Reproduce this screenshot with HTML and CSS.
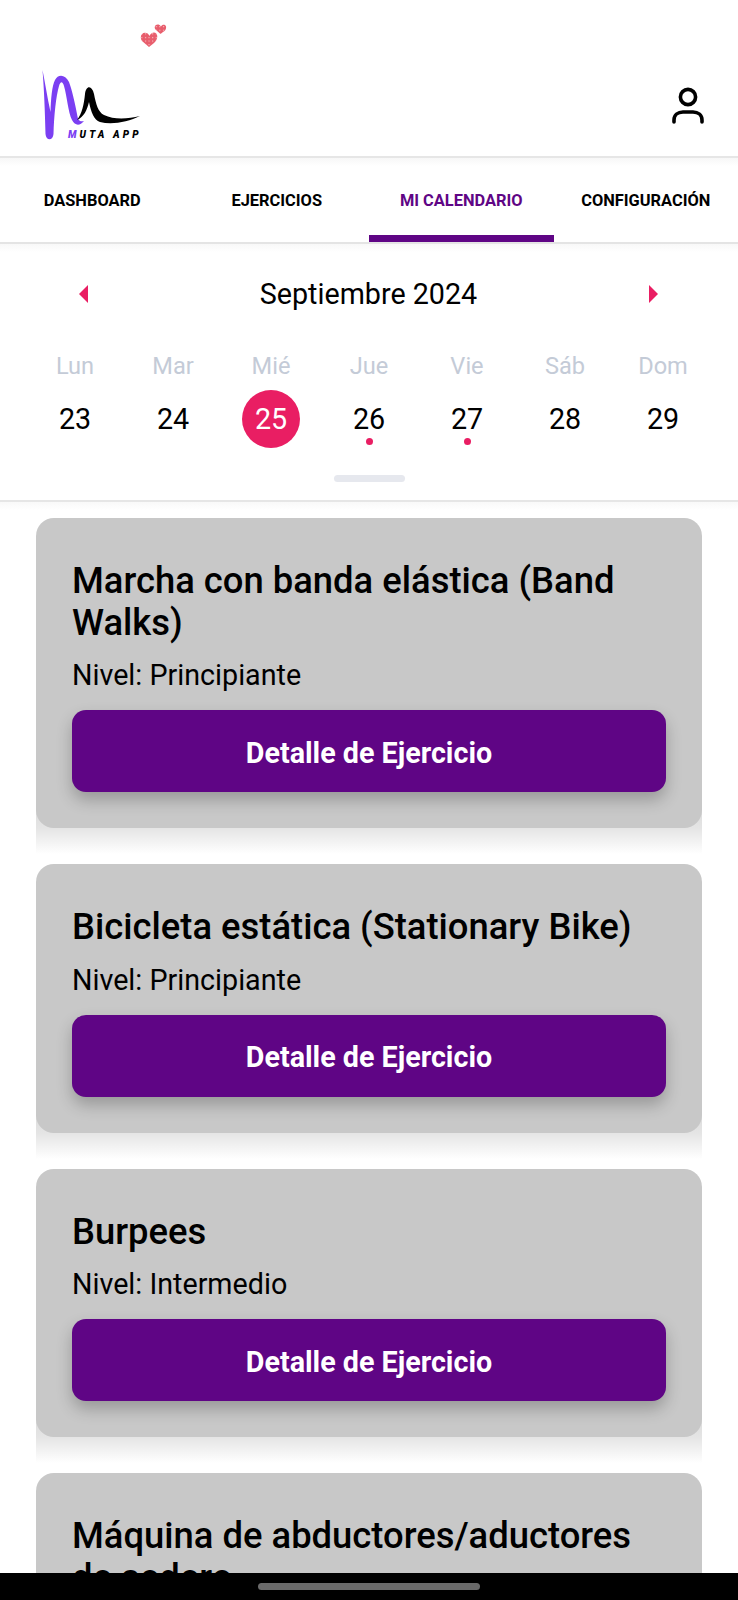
FILE: index.html
```html
<!DOCTYPE html>
<html lang="es">
  <head>
    <meta charset="UTF-8" />
    <meta name="viewport" content="width=device-width, initial-scale=1.0" />
    <title>Muta App - Mi Calendario</title>
    <link rel="stylesheet" href="styles.css">
  </head>
  <body>
  <div class="screen">
    <header class="top-bar">
      <svg class="logo" width="140" height="130" viewBox="30 15 140 130">
        <defs>
          <pattern id="heartDots" width="3.6" height="3.6" patternUnits="userSpaceOnUse">
            <circle cx="1.5" cy="1.5" r="0.6" fill="#fbd3d6" />
          </pattern>
        </defs>
        <g class="hearts">
          <path d="M149 47 L142 41 C139 37 142 32 146 33 C148 33 149 35 149.5 36 C151 32 156 31 157 35 C158 38 156 41 154 43 Z" fill="#e85d6c" />
          <path d="M149 47 L142 41 C139 37 142 32 146 33 C148 33 149 35 149.5 36 C151 32 156 31 157 35 C158 38 156 41 154 43 Z" fill="url(#heartDots)" />
          <path d="M160.5 34 L155.5 29.5 C153.5 27 155.5 24 158.5 24.5 C160 25 160.5 26 161 26.5 C162 24 165.5 24 166 26.5 C166.5 29 165 31 163 32 Z" fill="#e85d6c" />
          <path d="M160.5 34 L155.5 29.5 C153.5 27 155.5 24 158.5 24.5 C160 25 160.5 26 161 26.5 C162 24 165.5 24 166 26.5 C166.5 29 165 31 163 32 Z" fill="url(#heartDots)" />
        </g>
        <path d="M42.5 70 C44 88 45 112 45.5 134 C46 141 53 141 53.5 134 C54 116 56 96 59 86 C60.5 81 62.5 81 64 86 C67 96 68 112 72 120 C75 126 80 126 84 121 C79 122 78 120 77 114 C75 103 72 90 69 82 C65 74 58 74 55 80 C52 86 51 98 50.5 112 C47 96 45 82 42.5 70 Z" fill="#7b3ff2" />
        <path d="M77 120 C82 114 84 104 85 94 C86 85 92 85 94 94 C96 104 98 112 104 115 C114 120 128 119 140 116 C128 122 112 125 100 122 C94 120 91 112 89 102 C87 110 84 117 77 120 Z" fill="#000" />
        <text class="logo-text" x="68" y="138"><tspan fill="#7b3ff2">M</tspan>UTA APP</text>
      </svg>
      <svg class="user-icon" width="40" height="44" viewBox="0 0 40 44" fill="none" stroke="#000" stroke-width="3.6" stroke-linecap="round">
        <circle cx="20" cy="13" r="7.6" />
        <path d="M6 38 V36 C6 31 10 28 15 28 H25 C30 28 34 31 34 36 V38" />
      </svg>
    </header>

    <nav class="tabs">
      <a class="tab">DASHBOARD</a>
      <a class="tab">EJERCICIOS</a>
      <a class="tab active">MI CALENDARIO</a>
      <a class="tab">CONFIGURACIÓN</a>
    </nav>

    <section class="calendar">
      <div class="month-row">
        <span class="arrow arrow-left"></span>
        <span class="month-name">Septiembre 2024</span>
        <span class="arrow arrow-right"></span>
      </div>
      <div class="week">
        <div class="day"><span class="day-name">Lun</span><span class="day-num">23</span></div>
        <div class="day"><span class="day-name">Mar</span><span class="day-num">24</span></div>
        <div class="day"><span class="day-name">Mié</span><span class="day-num selected">25</span></div>
        <div class="day"><span class="day-name">Jue</span><span class="day-num marked">26</span></div>
        <div class="day"><span class="day-name">Vie</span><span class="day-num marked">27</span></div>
        <div class="day"><span class="day-name">Sáb</span><span class="day-num">28</span></div>
        <div class="day"><span class="day-name">Dom</span><span class="day-num">29</span></div>
      </div>
      <div class="handle"></div>
    </section>

    <main class="exercise-list">
      <div class="card">
        <h2>Marcha con banda elástica (Band Walks)</h2>
        <p>Nivel: Principiante</p>
        <button>Detalle de Ejercicio</button>
      </div>
      <div class="card">
        <h2>Bicicleta estática (Stationary Bike)</h2>
        <p>Nivel: Principiante</p>
        <button>Detalle de Ejercicio</button>
      </div>
      <div class="card">
        <h2>Burpees</h2>
        <p>Nivel: Intermedio</p>
        <button>Detalle de Ejercicio</button>
      </div>
      <div class="card">
        <h2>Máquina de abductores/aductores de sedero</h2>
      </div>
    </main>

    <div class="system-bar"><span class="home-pill"></span></div>
  </div>
  </body>
</html>
```

FILE: styles.css
```css
* {
  box-sizing: border-box;
}

body {
  margin: 0;
  background-color: #fff;
  font-family: Roboto, "Liberation Sans", sans-serif;
  color: #000;
}

.screen {
  position: relative;
  width: 738px;
  height: 1600px;
  overflow: hidden;
  display: flex;
  flex-direction: column;
}

.top-bar {
  height: 158px;
  flex-shrink: 0;
  padding: 15px 30px 0 30px;
  display: flex;
  justify-content: space-between;
  align-items: flex-start;
  background-color: #fff;
  border-bottom: 2px solid #e6e6e6;
}

.logo {
  display: block;
}

.logo path {
  filter: blur(0.3px);
}

.logo-text {
  font-size: 10px;
  font-weight: 900;
  font-style: italic;
  letter-spacing: 3.1px;
  fill: #000;
}

.user-icon {
  margin-top: 69px;
}

.tabs {
  height: 86px;
  flex-shrink: 0;
  display: grid;
  grid-template-columns: repeat(4, 1fr);
  background: linear-gradient(#f7f7f7, #fff 8px);
  border-bottom: 2px solid #e4e4e4;
}

.tab {
  display: flex;
  align-items: center;
  justify-content: center;
  font-size: 16.4px;
  font-weight: 700;
  white-space: nowrap;
}

.tab.active {
  color: #5f0585;
  box-shadow: inset 0 -7px 0 #5f0585;
}

.calendar {
  height: 258px;
  flex-shrink: 0;
  padding: 25px 26px 0;
  background: linear-gradient(#f8f8f8, #fff 8px);
  border-bottom: 2px solid #e6e6e6;
}

.month-row {
  height: 50px;
  padding: 0 54px 0 53px;
  display: flex;
  align-items: center;
  justify-content: space-between;
}

.month-name {
  font-size: 28.7px;
}

.arrow {
  width: 0;
  height: 0;
  border-top: 9px solid transparent;
  border-bottom: 9px solid transparent;
}

.arrow-left {
  border-right: 9px solid #e91e63;
}

.arrow-right {
  border-left: 9px solid #e91e63;
}

.week {
  margin-top: 33px;
  display: grid;
  grid-template-columns: repeat(7, 1fr);
}

.day {
  display: flex;
  flex-direction: column;
  align-items: center;
}

.day-name {
  font-size: 23.6px;
  line-height: 28px;
  color: #c4cbd7;
}

.day-num {
  position: relative;
  margin-top: 10px;
  width: 58px;
  height: 58px;
  border-radius: 50%;
  display: flex;
  align-items: center;
  justify-content: center;
  font-size: 28.7px;
}

.day-num.selected {
  background-color: #e91e63;
  color: #fff;
}

.day-num.marked::after {
  content: "";
  position: absolute;
  left: 25.5px;
  top: 48px;
  width: 7px;
  height: 7px;
  border-radius: 50%;
  background-color: #e91e63;
}

.handle {
  width: 71px;
  height: 7px;
  margin: 27px auto 0;
  border-radius: 4px;
  background-color: #e6e8ee;
}

.exercise-list {
  position: relative;
  z-index: 0;
  flex: 1;
  overflow: hidden;
  padding: 16px 36px 0;
  display: flex;
  flex-direction: column;
  gap: 36px;
  background: linear-gradient(#f9f9f9, #fff 8px);
}

.card {
  position: relative;
  flex-shrink: 0;
  padding: 42px 36px 36px;
  border-radius: 18px;
  background-color: #c8c8c8;
}

/* soft shadow only below the card, as wide as the card */
.card::after {
  content: "";
  position: absolute;
  z-index: -1;
  left: 0;
  right: 0;
  top: calc(100% - 20px);
  height: 46px;
  background: linear-gradient(rgba(0, 0, 0, 0.14), rgba(0, 0, 0, 0.1) 45%, rgba(0, 0, 0, 0));
}

.card h2 {
  margin: 0;
  font-size: 36.4px;
  line-height: 41.5px;
  font-weight: 500;
}

.card p {
  margin: 16px 0 0;
  font-size: 28.7px;
  line-height: 32px;
}

.card button {
  display: block;
  width: 100%;
  height: 82px;
  margin-top: 19px;
  padding-top: 4px;
  border: none;
  border-radius: 14px;
  background-color: #5f0585;
  color: #fff;
  font-family: inherit;
  font-size: 28.7px;
  font-weight: 700;
  box-shadow: 0 8px 16px rgba(0, 0, 0, 0.24);
}

.system-bar {
  position: absolute;
  left: 0;
  right: 0;
  bottom: 0;
  height: 27px;
  background-color: #000;
  display: flex;
  justify-content: center;
  padding-top: 10px;
}

.home-pill {
  width: 222px;
  height: 7px;
  border-radius: 4px;
  background-color: #6a6a6a;
}
```
